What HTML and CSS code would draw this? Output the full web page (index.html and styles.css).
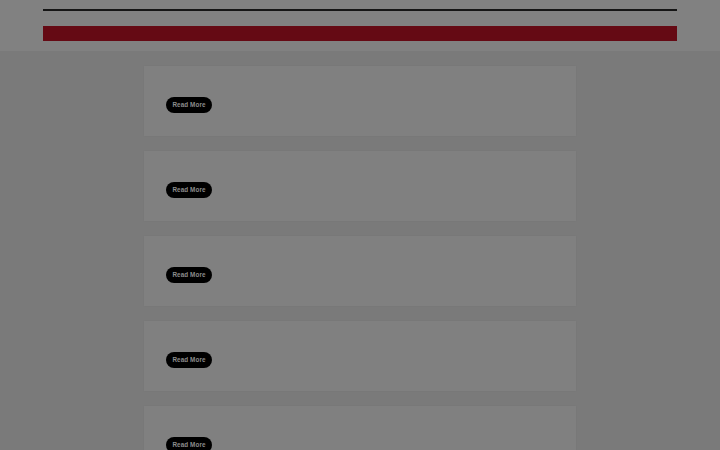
FILE: index.html
```html
<!DOCTYPE html>
<html>
<head>
<meta charset="utf-8">
<link rel="stylesheet" href="styles.css">
</head>
<body>
<header class="site-header">
  <div class="rule"></div>
  <div class="nav-bar"></div>
</header>
<main class="list">
  <article class="card"><a class="btn">Read More</a></article>
  <article class="card"><a class="btn">Read More</a></article>
  <article class="card"><a class="btn">Read More</a></article>
  <article class="card"><a class="btn">Read More</a></article>
  <article class="card"><a class="btn">Read More</a></article>
</main>
</body>
</html>
```
FILE: styles.css
```css
html, body {
  margin: 0;
  padding: 0;
}
body {
  background: #7a7a7a;
  font-family: "Liberation Sans", Arial, sans-serif;
  height: 450px;
  overflow: hidden;
}
.site-header {
  background: #818181;
  height: 51px;
  padding: 0 43px;
  box-sizing: border-box;
  padding-top: 9px;
}
.rule {
  height: 2px;
  background: #151515;
}
.nav-bar {
  margin-top: 15px;
  height: 15px;
  background: #650a14;
}
.list {
  width: 432px;
  margin: 15px auto 0;
  display: flex;
  flex-direction: column;
  gap: 15px;
}
.card {
  background: #808080;
  height: 70px;
  padding: 31px 0 0 22px;
  box-sizing: border-box;
  display: flex;
  align-items: flex-start;
  box-shadow: 0 0 2px rgba(0,0,0,0.05);
}
.btn {
  display: block;
  background: #000;
  color: #8c8c8c;
  font-size: 6.3px;
  font-weight: bold;
  letter-spacing: 0.1px;
  line-height: 16px;
  height: 16px;
  width: 46px;
  text-align: center;
  border-radius: 8px;
}
```
